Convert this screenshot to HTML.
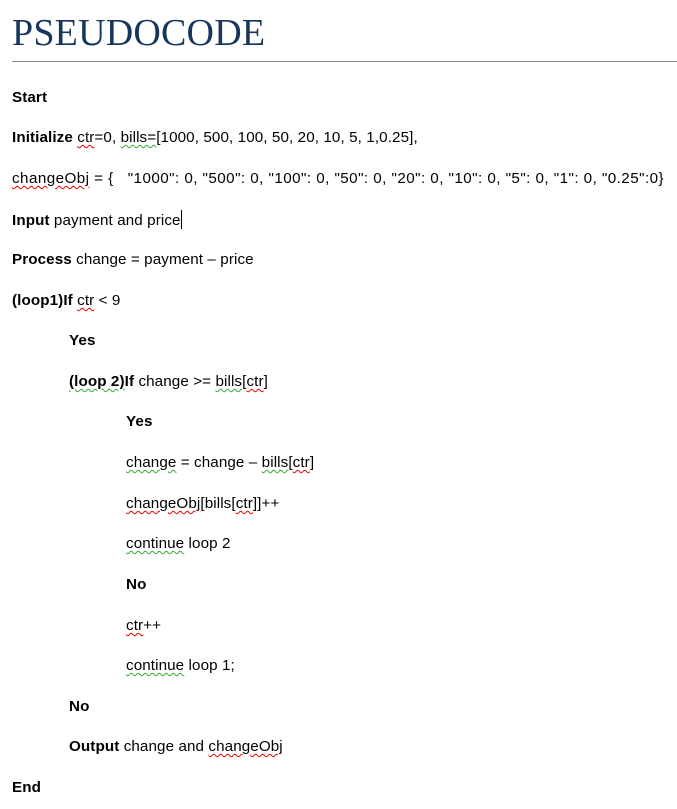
<!DOCTYPE html>
<html><head><meta charset="utf-8"><style>
body{margin:0;width:677px;height:809px;background:#fff;position:relative;overflow:hidden;font-family:"Liberation Sans",sans-serif;color:#000}
.t{position:absolute;left:12px;top:9px;font-family:"Liberation Serif",serif;font-size:38px;color:#17365D;letter-spacing:0.2px;line-height:48px}
.hr{position:absolute;left:12px;top:61px;width:665px;height:1px;background:#888}
.l{position:absolute;font-size:15.2px;line-height:18px;white-space:pre;letter-spacing:0.1px}
b{font-weight:bold}
.r{text-decoration:underline wavy #e00;text-decoration-thickness:1px;text-underline-offset:2px}
.g{text-decoration:underline wavy #3a3;text-decoration-thickness:1px;text-underline-offset:2px}
.cur{display:inline-block;width:1.5px;height:19px;background:#000;vertical-align:-4px}
</style></head><body>
<div class="t">PSEUDOCODE</div>
<div class="hr"></div>
<div class="l" style="left:12px;top:89px"><b>Start</b></div>
<div class="l" style="left:12px;top:129px"><b>Initialize</b> <span class="r">ctr</span>=0, <span class="g">bills=</span>[1000, 500, 100, 50, 20, 10, 5, 1,0.25],</div>
<div class="l" style="left:12px;top:170px;letter-spacing:0.45px"><span class="r">changeObj</span> = {   "1000": 0, "500": 0, "100": 0, "50": 0, "20": 0, "10": 0, "5": 0, "1": 0, "0.25":0}</div>
<div class="l" style="left:12px;top:210px"><b>Input</b> payment and price<span class="cur"></span></div>
<div class="l" style="left:12px;top:251px"><b>Process</b> change = payment – price</div>
<div class="l" style="left:12px;top:292px"><b>(loop1)If</b> <span class="r">ctr</span> &lt; 9</div>
<div class="l" style="left:69px;top:332px"><b>Yes</b></div>
<div class="l" style="left:69px;top:373px"><b class="g">(loop 2)</b><b>If</b> change &gt;= <span class="g">bills[</span><span class="r">ctr</span>]</div>
<div class="l" style="left:126px;top:413px"><b>Yes</b></div>
<div class="l" style="left:126px;top:454px"><span class="g">change</span> = change – <span class="g">bills[</span><span class="r">ctr</span>]</div>
<div class="l" style="left:126px;top:495px"><span class="r">changeObj</span>[bills[<span class="r">ctr</span>]]++</div>
<div class="l" style="left:126px;top:535px"><span class="g">continue</span> loop 2</div>
<div class="l" style="left:126px;top:576px"><b>No</b></div>
<div class="l" style="left:126px;top:617px"><span class="r">ctr</span>++</div>
<div class="l" style="left:126px;top:657px"><span class="g">continue</span> loop 1;</div>
<div class="l" style="left:69px;top:698px"><b>No</b></div>
<div class="l" style="left:69px;top:738px"><b>Output</b> change and <span class="r">changeObj</span></div>
<div class="l" style="left:12px;top:779px"><b>End</b></div>
</body></html>
